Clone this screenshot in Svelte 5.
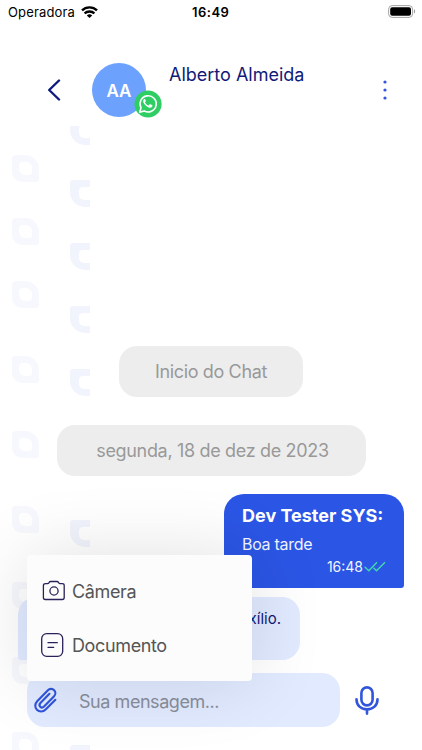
<script lang="ts">
  type Tile = { top: number; side: "left" | "right" };

  const leftTops = [155, 218, 281, 356, 431, 506, 582, 657, 732];
  const rightTops = [118, 180, 243, 306, 369, 445, 520, 595, 745];

  // Watermark tiles behind the conversation
  const tiles: Tile[] = [
    ...leftTops.map((top): Tile => ({ top, side: "left" })),
    ...rightTops.map((top): Tile => ({ top, side: "right" })),
  ];

  let contact = "Alberto Almeida";
  let menuOpen = $state(true);
  let draft = $state("");
</script>

<main class="phone">
  <div class="watermark">
    {#each tiles as tile}
      <div class="tile {tile.side}" style="top: {tile.top}px"></div>
    {/each}
  </div>

  <div class="status">
    <div class="carrier">
      <span class="carrier-name">Operadora</span>
      <svg width="17" height="12" viewBox="0 0 17 12" fill="none" stroke="#000" stroke-width="2.4">
        <path d="M1 4.4C5.1 .4 11.9 .4 16 4.4" />
        <path d="M3.6 7.4C6.3 4.8 10.7 4.8 13.4 7.4" />
        <path d="M5.8 9.4Q8.5 7.2 11.2 9.4L8.5 12Z" fill="#000" stroke="none" />
      </svg>
    </div>
    <span class="clock">16:49</span>
    <svg class="battery" width="28" height="13" viewBox="0 0 28 13">
      <rect x=".6" y=".6" width="24" height="11.8" rx="3.6" fill="none" stroke="#a3a3a3" />
      <rect x="2.2" y="2.2" width="20.8" height="8.6" rx="2" fill="#000" />
      <path d="M26 4.3v4.4c1.6-.6 1.6-3.8 0-4.4z" fill="#a3a3a3" />
    </svg>
  </div>

  <header>
    <button class="back" aria-label="Voltar">
      <svg width="14" height="22" viewBox="0 0 14 22" fill="none" stroke="#0f1a7d" stroke-width="2.4">
        <path d="M12 1.5L2.2 11L12 20.5" stroke-linecap="round" stroke-linejoin="round" />
      </svg>
    </button>
    <div class="avatar">
      <span>AA</span>
      <svg class="badge" width="28" height="28" viewBox="0 0 28 28">
        <circle cx="14" cy="14" r="13.6" fill="#2fce65" />
        <path d="M5.7 22.2L7 17.7A8.1 8.1 0 1 1 10.1 20.9Z" fill="none" stroke="#fff" stroke-width="1.6" stroke-linejoin="round" />
        <path
          d="M11.4 9.7c-.3-.6-.5-.6-.8-.6-.7.1-1.4.8-1.4 2.100 0 1.200.8 2.400 1.800 3.600 1.200 1.300 2.600 2.400 4.500 2.900 1.300.3 2.700-.5 2.900-1.600.1-.6.1-.8-.3-1l-1.900-.9c-.3-.1-.5-.1-.7.2l-.7.9c-.2.2-.4.300-.7.100-1.300-.6-2.300-1.500-3-2.700-.2-.3 0-.5.2-.7l.5-.7c.1-.2.1-.4 0-.6z"
          fill="#fff"
        />
      </svg>
    </div>
    <h1>{contact}</h1>
    <button class="more" aria-label="Opções">
      <svg width="4" height="20" viewBox="0 0 4 20" fill="#3156dc">
        <circle cx="2" cy="2" r="1.6" />
        <circle cx="2" cy="10" r="1.6" />
        <circle cx="2" cy="18" r="1.6" />
      </svg>
    </button>
  </header>

  <section class="chat">
    <div class="pill start">Inicio do Chat</div>
    <div class="pill day">segunda, 18 de dez de 2023</div>

    <article class="bubble sent">
      <strong>Dev Tester SYS:</strong>
      <p>Boa tarde</p>
      <div class="meta">
        <span>16:48</span>
        <svg width="22" height="11" viewBox="0 0 22 11" fill="none" stroke="#3fdcab" stroke-width="1.4">
          <path d="M.6 5.700L4.800 9.700L13 1.200" />
          <path d="M9.500 6.700L12.500 9.700L21 1.200" />
        </svg>
      </div>
    </article>

    <article class="bubble received">xílio.</article>
  </section>

  <footer>
    <div class="composer">
      <svg width="26" height="28" viewBox="-1 -1 28 30" fill="none" stroke="#2f55dc" stroke-width="2.3" stroke-linecap="round">
        <path
          d="M23.100 13.800L12.600 24.300C9.800 27.100 5.600 26.900 3.200 24.500C.8 22.100 .8 18.100 3.500 15.300L14.800 3.700C16.900 1.600 20 1.600 21.800 3.400C23.600 5.200 23.500 8.100 21.500 10.200L10.900 21C9.600 22.300 7.900 22.300 6.800 21.200C5.700 20.100 5.800 18.500 7 17.200L16.700 7.400"
        />
      </svg>
      <input bind:value={draft} placeholder="Sua mensagem..." />
    </div>
    <button class="mic" aria-label="Gravar áudio">
      <svg width="24" height="29" viewBox="0 0 24 29" fill="none" stroke="#3156dc" stroke-width="2.600" stroke-linecap="round">
        <rect x="6.400" y="1.400" width="11.200" height="18" rx="5.600" />
        <path d="M1.500 13.200C1.500 19.500 6 23.400 12 23.400S22.500 19.500 22.500 13.200M12 23.500V27.600" />
      </svg>
    </button>
  </footer>

  {#if menuOpen}
    <div class="menu">
      <button class="item">
        <svg width="24" height="24" viewBox="-.8 -.5 24 24" fill="none" stroke="#292259" stroke-width="1.300">
          <path
            d="M4 4.200H5.500C6.600 4.200 7 3.700 7.300 3C7.600 2.200 8 2 9 2H15C16 2 16.400 2.200 16.700 3C17 3.700 17.400 4.200 18.500 4.200H20.500Q22.400 4.200 22.400 6V18Q22.400 20 20.500 20H3.500Q1.600 20 1.600 18V6Q1.600 4.200 4 4.200Z"
          />
          <circle cx="12.200" cy="11.500" r="4.100" />
        </svg>
        Câmera
      </button>
      <button class="item">
        <svg width="24" height="24" viewBox="0 0 24 24" fill="none" stroke="#292259" stroke-width="1.300">
          <rect x=".7" y=".7" width="21" height="22.600" rx="5" />
          <path d="M7 9.700H16.300M7 14.300H12.700" stroke-linecap="round" />
        </svg>
        Documento
      </button>
    </div>
  {/if}
</main>

<style>
  :global(body) {
    margin: 0;
    background: #fff;
  }
  .phone {
    position: relative;
    width: 422px;
    height: 750px;
    overflow: hidden;
    display: flex;
    flex-direction: column;
    background: #fff;
    font-family: Inter, "Liberation Sans", sans-serif;
  }
  button {
    border: 0;
    padding: 0;
    background: none;
    font: inherit;
  }
  svg {
    display: block;
    flex: none;
  }

  .watermark {
    position: absolute;
    inset: 126px 0 0;
    overflow: hidden;
  }
  .tile {
    position: absolute;
    margin-top: -126px;
    left: 12px;
    width: 27px;
    height: 27px;
    background: #f7f8fe;
    border-radius: 4px 14px 3px 10px;
  }
  .tile::after {
    content: "";
    position: absolute;
    inset: 7px;
    background: #fff;
    border-radius: 4px 6px 3px 6px;
  }
  .tile.right {
    left: 70px;
    width: 20px;
    background: #f1f4fd;
    border-radius: 3px 0 0 15px;
  }
  .tile.right::after {
    inset: 7px 0 7px 9px;
    border-radius: 4px 0 0 5px;
  }

  .status {
    position: relative;
    height: 24px;
    display: flex;
    align-items: center;
    padding: 0 6px 0 8px;
    box-sizing: border-box;
    color: #000;
  }
  .carrier {
    display: flex;
    align-items: center;
    gap: 6px;
    width: 184px;
  }
  .carrier-name {
    font-size: 13px;
    letter-spacing: 0.15px;
  }
  .clock {
    flex: 1;
    font-size: 13px;
    font-weight: 600;
    letter-spacing: 0.5px;
  }
  .battery {
    margin-top: -1px;
  }

  header {
    position: relative;
    height: 102px;
    display: flex;
    align-items: flex-start;
    padding: 39px 35px 0 47px;
    box-sizing: border-box;
  }
  .back {
    margin-top: 16px;
    width: 45px;
  }
  .avatar {
    position: relative;
    width: 54px;
    height: 54px;
    border-radius: 50%;
    background: #6ca1fe;
    display: grid;
    place-items: center;
    color: #fff;
    font-size: 17px;
    font-weight: 600;
  }
  .avatar span {
    padding-top: 1px;
  }
  .badge {
    position: absolute;
    left: 42px;
    top: 27px;
  }
  h1 {
    flex: 1;
    margin: 1px 0 0 23px;
    font-size: 18px;
    font-weight: 400;
    line-height: 22px;
    color: #101a78;
    white-space: nowrap;
  }
  .more {
    margin-top: 17px;
  }

  .chat {
    position: relative;
    height: 534px;
    display: flex;
    flex-direction: column;
    align-items: center;
  }
  .pill {
    height: 51px;
    line-height: 52px;
    border-radius: 18px;
    background: #ededed;
    color: #999;
    font-size: 18px;
    letter-spacing: -0.37px;
    text-align: center;
  }
  .start {
    width: 184px;
    margin-top: 219.5px;
  }
  .day {
    width: 309px;
    margin-top: 28px;
    margin-bottom: 18px;
    letter-spacing: -0.33px;
    text-indent: 3px;
  }
  .bubble {
    box-sizing: border-box;
  }
  .sent {
    align-self: flex-end;
    width: 180px;
    height: 94px;
    margin-right: 18px;
    padding: 10px 18px 0;
    border-radius: 20px 20px 3px 3px;
    background: #2b55e5;
    color: #f1f4ff;
  }
  .sent strong {
    display: block;
    font-size: 18px;
    line-height: 24px;
    color: #fff;
    white-space: nowrap;
  }
  .sent p {
    margin: 6px 0 0;
    font-size: 16px;
    line-height: 20px;
    letter-spacing: -0.3px;
  }
  .meta {
    display: flex;
    align-items: center;
    justify-content: flex-end;
    gap: 1px;
    margin-top: 4px;
    font-size: 14px;
    line-height: 17px;
  }
  .received {
    align-self: flex-start;
    width: 282px;
    height: 63px;
    margin: 9px 0 0 18px;
    padding: 11px 19px;
    border-radius: 18px 18px 18px 3px;
    background: #e1eaff;
    color: #101a78;
    font-size: 15px;
    line-height: 22px;
    text-align: right;
  }

  footer {
    position: relative;
    display: flex;
    align-items: center;
    padding: 13px 43px 0 27px;
  }
  .composer {
    flex: none;
    width: 313px;
    height: 54px;
    padding-left: 6px;
    box-sizing: border-box;
    display: flex;
    align-items: center;
    border-radius: 18px;
    background: #e1eaff;
  }
  input {
    width: 220px;
    margin-left: 20px;
    padding: 3px 0 0;
    border: 0;
    outline: 0;
    background: none;
    font: inherit;
    font-size: 18px;
    letter-spacing: -0.45px;
  }
  input::placeholder {
    color: #898e9b;
    opacity: 1;
  }
  .mic {
    margin-left: 15px;
  }

  .menu {
    position: absolute;
    left: 27px;
    top: 555px;
    width: 225px;
    height: 126px;
    padding: 9px 0 9px 14px;
    box-sizing: border-box;
    display: flex;
    flex-direction: column;
    border-radius: 4px;
    background: #fcfcfc;
    box-shadow: 0 0 75px rgba(0, 0, 0, 0.12);
  }
  .item {
    flex: 1;
    display: flex;
    align-items: center;
    gap: 7px;
    color: #555;
    font-size: 18px;
    letter-spacing: -0.37px;
  }
</style>
